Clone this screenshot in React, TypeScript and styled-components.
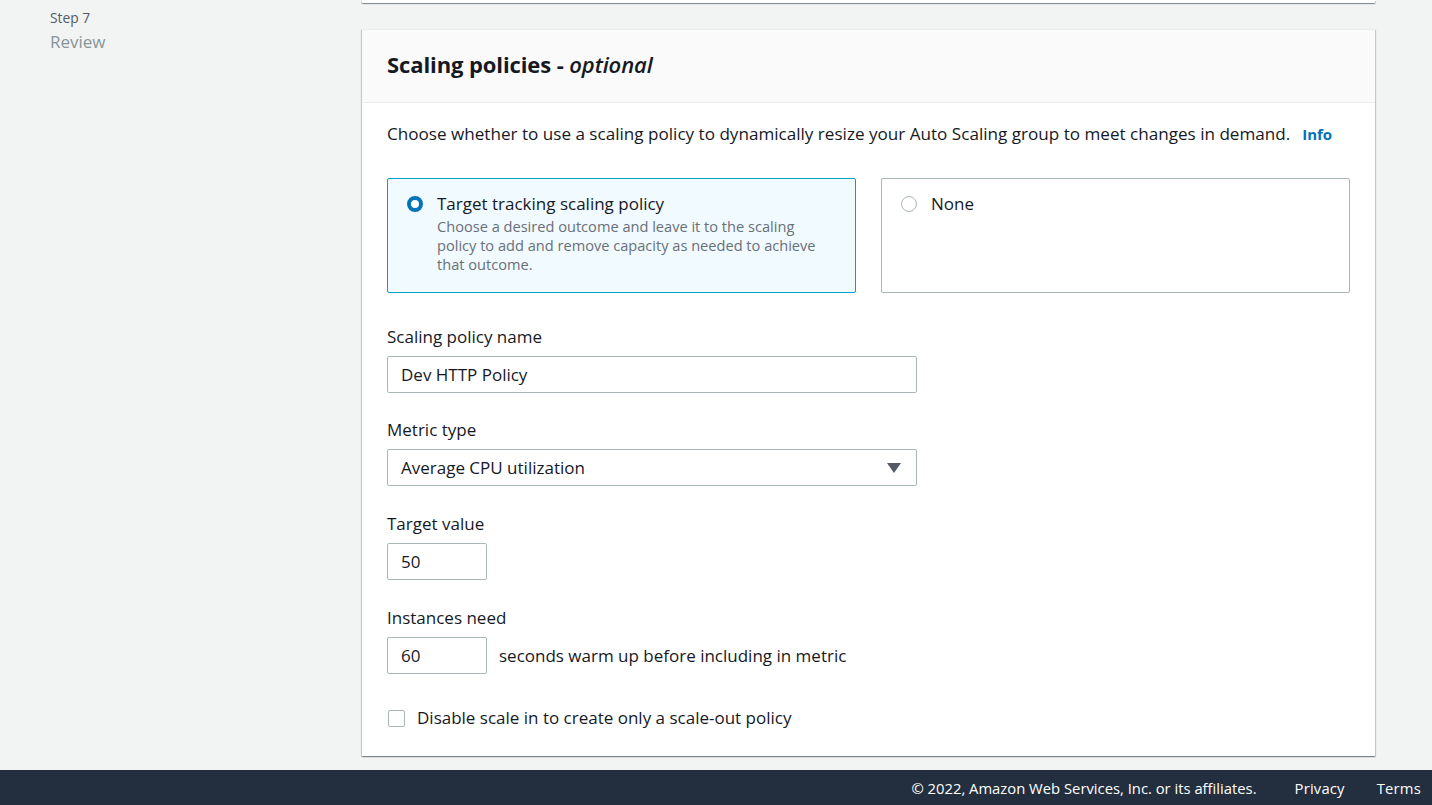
import React from "react";
import styled, { createGlobalStyle } from "styled-components";

const Global = createGlobalStyle`
  html, body { margin: 0; padding: 0; }
  body {
    background: #f2f3f3;
    font-family: "Open Sans", "Noto Sans", Arial, sans-serif;
    color: #16191f;
    -webkit-font-smoothing: antialiased;
  }
  * { box-sizing: border-box; }
`;

const Page = styled.div`
  display: flex;
  flex-direction: column;
  height: 805px;
  overflow: hidden;
`;

const Content = styled.div`
  flex: 1;
  display: grid;
  grid-template-columns: 362px 1013px 1fr;
`;

const SideNav = styled.nav`
  padding: 9px 0 0 50px;
  display: flex;
  flex-direction: column;
`;

const StepNum = styled.div`
  font-size: 13.8px;
  line-height: 18px;
  color: #545b64;
`;

const StepName = styled.div`
  margin-top: 4px;
  font-size: 17px;
  line-height: 22px;
  color: #879596;
`;

const Main = styled.main`
  display: flex;
  flex-direction: column;
`;

const cardShadow = `
  box-shadow: 0 1px 1px 0 rgba(0, 28, 36, 0.3),
    1px 1px 1px 0 rgba(0, 28, 36, 0.15),
    -1px 1px 1px 0 rgba(0, 28, 36, 0.15);
`;

const PrevCardStub = styled.div`
  height: 3px;
  background: #fff;
  ${cardShadow}
`;

const Card = styled.section`
  margin-top: 26px;
  background: #fff;
  border-top: 1px solid #eaeded;
  ${cardShadow}
`;

const CardHeader = styled.header`
  height: 73px;
  padding: 0 25px 4px;
  display: flex;
  align-items: center;
  background: #fafafa;
  border-bottom: 1px solid #eaeded;
`;

const Title = styled.h2`
  margin: 0;
  font-size: 22px;
  line-height: 28px;
  font-weight: 700;
  color: #16191f;
  letter-spacing: -0.1px;
  i { font-weight: 600; }
`;

const CardBody = styled.div`
  padding: 20px 25px 27px;
`;

const Description = styled.p`
  margin: 0;
  font-size: 17.1px;
  line-height: 22px;
  display: flex;
  align-items: baseline;
  gap: 12px;
`;

const InfoLink = styled.a`
  font-size: 15px;
  font-weight: 700;
  color: #0073bb;
  text-decoration: none;
`;

const Tiles = styled.div`
  margin-top: 33px;
  display: grid;
  grid-template-columns: 1fr 1fr;
  gap: 25px;
`;

const Tile = styled.div<{ $selected?: boolean }>`
  min-height: 115px;
  padding: 14px 19px 16px;
  border: 1px solid ${(p) => (p.$selected ? "#00a1c9" : "#aab7b8")};
  border-radius: 2px;
  background: ${(p) => (p.$selected ? "#f1faff" : "#fff")};
  display: flex;
  align-items: flex-start;
  gap: 14px;
`;

const Radio = styled.span<{ $checked?: boolean }>`
  flex: none;
  width: 16px;
  height: 16px;
  margin-top: 3px;
  border-radius: 50%;
  background: #fff;
  border: ${(p) => (p.$checked ? "4.5px solid #0073bb" : "1px solid #aab7b8")};
`;

const TileText = styled.div`
  display: flex;
  flex-direction: column;
`;

const TileTitle = styled.div`
  font-size: 17px;
  line-height: 22px;
  color: #16191f;
`;

const TileDesc = styled.div`
  margin-top: 2px;
  font-size: 14.6px;
  line-height: 19px;
  color: #687078;
  max-width: 392px;
`;

const Field = styled.div<{ $top: number }>`
  margin-top: ${(p) => p.$top}px;
  display: flex;
  flex-direction: column;
  gap: 8px;
`;

const Label = styled.label`
  font-size: 17px;
  line-height: 22px;
  color: #16191f;
`;

const Input = styled.div<{ $width: number }>`
  width: ${(p) => p.$width}px;
  height: 37px;
  padding: 0 13px;
  border: 1px solid #aab7b8;
  border-radius: 2px;
  background: #fff;
  font-size: 17px;
  line-height: 22px;
  display: flex;
  align-items: center;
  justify-content: space-between;
  color: #16191f;
`;

const Caret = styled.svg`
  width: 14px;
  height: 10px;
  margin-right: 2px;
`;

const InlineRow = styled.div`
  display: flex;
  align-items: center;
  gap: 12px;
  font-size: 17px;
`;

const CheckRow = styled.div`
  margin-top: 33px;
  display: flex;
  align-items: center;
  gap: 12px;
  font-size: 17px;
  line-height: 22px;
`;

const CheckBox = styled.span`
  width: 17px;
  height: 17px;
  margin-left: 1px;
  border: 1px solid #aab7b8;
  border-radius: 2px;
  background: #fff;
`;

const Footer = styled.footer`
  height: 35px;
  flex: none;
  background: #232f3e;
  display: flex;
  align-items: center;
  justify-content: flex-end;
  padding-right: 11px;
  font-size: 14.8px;
  color: #fff;
`;

const FooterLink = styled.a<{ $gap: number }>`
  margin-left: ${(p) => p.$gap}px;
  color: #fff;
  text-decoration: none;
  letter-spacing: 0.2px;
`;

export default function App() {
  return (
    <Page>
      <Global />
      <Content>
        <SideNav>
          <StepNum>Step 7</StepNum>
          <StepName>Review</StepName>
        </SideNav>
        <Main>
          <PrevCardStub />
          <Card>
            <CardHeader>
              <Title>
                Scaling policies - <i>optional</i>
              </Title>
            </CardHeader>
            <CardBody>
              <Description>
                <span>
                  Choose whether to use a scaling policy to dynamically resize your Auto Scaling group to meet
                  changes in demand.
                </span>
                <InfoLink href="#">Info</InfoLink>
              </Description>
              <Tiles>
                <Tile $selected>
                  <Radio $checked />
                  <TileText>
                    <TileTitle>Target tracking scaling policy</TileTitle>
                    <TileDesc>
                      Choose a desired outcome and leave it to the scaling policy to add and remove capacity as
                      needed to achieve that outcome.
                    </TileDesc>
                  </TileText>
                </Tile>
                <Tile>
                  <Radio />
                  <TileText>
                    <TileTitle>None</TileTitle>
                  </TileText>
                </Tile>
              </Tiles>
              <Field $top={33}>
                <Label>Scaling policy name</Label>
                <Input $width={530}>Dev HTTP Policy</Input>
              </Field>
              <Field $top={26}>
                <Label>Metric type</Label>
                <Input $width={530}>
                  <span>Average CPU utilization</span>
                  <Caret viewBox="0 0 14 10">
                    <path d="M0 0 H14 L7 10 Z" fill="#545b64" />
                  </Caret>
                </Input>
              </Field>
              <Field $top={27}>
                <Label>Target value</Label>
                <Input $width={100}>50</Input>
              </Field>
              <Field $top={27}>
                <Label>Instances need</Label>
                <InlineRow>
                  <Input $width={100}>60</Input>
                  <span>seconds warm up before including in metric</span>
                </InlineRow>
              </Field>
              <CheckRow>
                <CheckBox />
                <span>Disable scale in to create only a scale-out policy</span>
              </CheckRow>
            </CardBody>
          </Card>
        </Main>
      </Content>
      <Footer>
        <span>© 2022, Amazon Web Services, Inc. or its affiliates.</span>
        <FooterLink href="#" $gap={38}>Privacy</FooterLink>
        <FooterLink href="#" $gap={32}>Terms</FooterLink>
      </Footer>
    </Page>
  );
}
